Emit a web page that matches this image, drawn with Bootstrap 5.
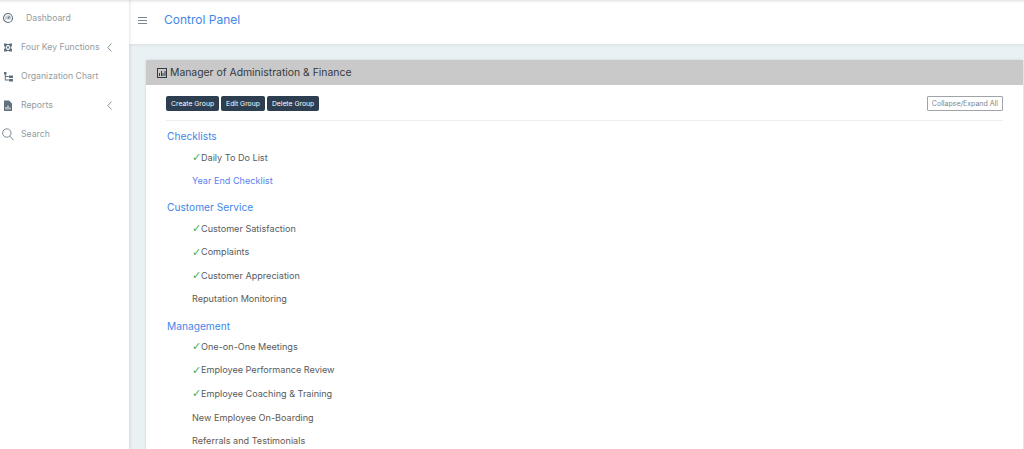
<!DOCTYPE html>
<html lang="en"><head><meta charset="utf-8"><title>Control Panel</title>
<link href="https://cdn.jsdelivr.net/npm/bootstrap@5.3.0/dist/css/bootstrap.min.css" rel="stylesheet">
<style>
html,body{height:449px;overflow:hidden}
body{font-family:"Inter","Liberation Sans",sans-serif;background:#eaf1f5;color:#495057;font-size:10px}
.shell{height:449px}
.side{width:129px;flex:none;background:#fff;box-shadow:1px 0 3px rgba(0,0,0,.1),inset 0 3px 3px -2px rgba(0,0,0,.14);z-index:2;padding-top:4px}
.side-item{height:29px;color:#939ca2;font-size:8.7px;padding-left:2px}
.side-icon{width:13px;height:13px;flex:none;margin-right:6px;fill:#5f717e}
.side-caret{width:5px;height:9px;margin-left:auto;margin-right:17px;stroke:#8d969c;fill:none}
.dash-label{margin-left:5px}
.top{height:44px;background:#fff;box-shadow:0 1px 3px rgba(0,0,0,.08),inset 0 3px 3px -2px rgba(0,0,0,.14);padding:0 0 4px 9px}
.burger{width:9px;height:7px;stroke:#7d868c;margin-right:17px}
.title{font-size:12px;color:#3f87e8;margin:0;font-weight:400}
.panel{margin:16px 1px 0 17px;background:#fff;border-radius:2px 2px 0 0;box-shadow:0 0 3px rgba(0,0,0,.12)}
.panel-head{height:25px;background:#c9c9c9;color:#343a40;font-size:10.4px;padding-left:11px}
.panel-icon{width:10px;height:10px;margin-right:3px;stroke:#343a40;fill:none}
.panel-body{padding:11px 20px 0 20px}
.tools{padding-bottom:9px;border-bottom:1px solid #eee;gap:2px}
.act{background:#2c3e50;color:#fff;font-size:6.8px;line-height:9px;padding:3px 5px;border-radius:2px;border:0;height:15px}
.act-ghost{background:#fff;color:#7d868c;border:1px solid #a0a4a8;margin-left:auto;height:15px;line-height:11px;padding:1px 4px;font-size:7px;border-radius:1px}
.groups{padding-top:.9px}
.group-name{font-size:10.2px;color:#3f87e8;margin:7.6px 0 2.2px 1px;line-height:14px;font-weight:400}
.entry{height:23.6px;padding-left:26px;font-size:9.1px;color:#64594d}
.tick{color:#4caf50;font-size:11px;line-height:1;width:9px;flex:none;font-family:"DejaVu Sans",sans-serif}
.entry-link{color:#5b7ff0}
.entry-done{color:#555c62}
</style></head><body>
<div class="d-flex shell">
<nav class="side d-flex flex-column">
<div class="side-item d-flex align-items-center"><svg class="side-icon" viewBox="0 0 13 13"><circle cx="6" cy="6" r="4.500" fill="none" stroke="#5f717e" stroke-width="1.100"/><path d="M3 7.500a3.200 3.200 0 1 1 6 0z" opacity=".35"/><path d="M5.500 6.500l2-3 .6.400-1.600 3z"/></svg><span class="dash-label">Dashboard</span></div>
<div class="side-item d-flex align-items-center"><svg class="side-icon" viewBox="0 0 13 13"><path d="M2 2.500h2.800v2.800H2zM7.200 2.500H10v2.800H7.200zM2 7.700h2.800v2.800H2zM7.200 7.700H10v2.800H7.200zM5 5.500h2v2H5zM4.800 3h2.400v1H4.800zM4.800 9h2.400v1H4.800zM2.800 5.300h1v2.400h-1zM8.200 5.300h1v2.400h-1z"/></svg><span>Four Key Functions</span><svg class="side-caret" viewBox="0 0 5 9"><path d="M4.500 .5L.8 4.500l3.700 4"/></svg></div>
<div class="side-item d-flex align-items-center"><svg class="side-icon" viewBox="0 0 13 13"><path d="M2 2h2.500v2.500H2zM2.800 4.500h1V10h-1zM2.800 6h4v1h-4zM2.800 9.500h4v1h-4zM7 5.500h4V8H7zM7 9h4v2.500H7z"/></svg><span>Organization Chart</span></div>
<div class="side-item d-flex align-items-center"><svg class="side-icon" viewBox="0 0 13 13"><path fill-rule="evenodd" d="M2 1.500h5l3 3v7.500H2zM3.500 10.500h1V8h-1zm2 0h1V6.500h-1zm2 0h1V8.500h-1z"/></svg><span>Reports</span><svg class="side-caret" viewBox="0 0 5 9"><path d="M4.500 .5L.8 4.500l3.700 4"/></svg></div>
<div class="side-item d-flex align-items-center"><svg class="side-icon" viewBox="0 0 13 13"><circle cx="4.800" cy="5" r="4.200" fill="none" stroke="#7d8a93"/><path d="M7.800 8l3.700 4.300" stroke="#7d8a93" fill="none"/></svg><span>Search</span></div>
</nav>
<div class="flex-grow-1 overflow-hidden">
<header class="top d-flex align-items-center"><svg class="burger" viewBox="0 0 9 7"><path d="M0 .5h9M0 3.500h9M0 6.500h9"/></svg><h1 class="title">Control Panel</h1></header>
<section class="panel">
<div class="panel-head d-flex align-items-center"><svg class="panel-icon" viewBox="0 0 10 10"><rect x=".5" y=".5" width="9" height="9"/><path d="M2.500 8V5M4.500 8V3M6 8V5M8 8V3"/></svg>Manager of Administration &amp; Finance</div>
<div class="panel-body">
<div class="tools d-flex"><button class="btn act">Create Group</button><button class="btn act">Edit Group</button><button class="btn act">Delete Group</button><button class="btn act-ghost">Collapse/Expand All</button></div>
<div class="groups">
<h2 class="group-name">Checklists</h2>
<div class="entry d-flex align-items-center entry-done"><span class="tick">✓</span>Daily To Do List</div>
<div class="entry d-flex align-items-center entry-link">Year End Checklist</div>
<h2 class="group-name">Customer Service</h2>
<div class="entry d-flex align-items-center entry-done"><span class="tick">✓</span>Customer Satisfaction</div>
<div class="entry d-flex align-items-center entry-done"><span class="tick">✓</span>Complaints</div>
<div class="entry d-flex align-items-center entry-done"><span class="tick">✓</span>Customer Appreciation</div>
<div class="entry d-flex align-items-center">Reputation Monitoring</div>
<h2 class="group-name">Management</h2>
<div class="entry d-flex align-items-center entry-done"><span class="tick">✓</span>One-on-One Meetings</div>
<div class="entry d-flex align-items-center entry-done"><span class="tick">✓</span>Employee Performance Review</div>
<div class="entry d-flex align-items-center entry-done"><span class="tick">✓</span>Employee Coaching &amp; Training</div>
<div class="entry d-flex align-items-center">New Employee On-Boarding</div>
<div class="entry d-flex align-items-center">Referrals and Testimonials</div>
</div>
</div>
</section>
</div>
</div>
<script src="https://cdn.jsdelivr.net/npm/bootstrap@5.3.0/dist/js/bootstrap.bundle.min.js"></script>
</body></html>
